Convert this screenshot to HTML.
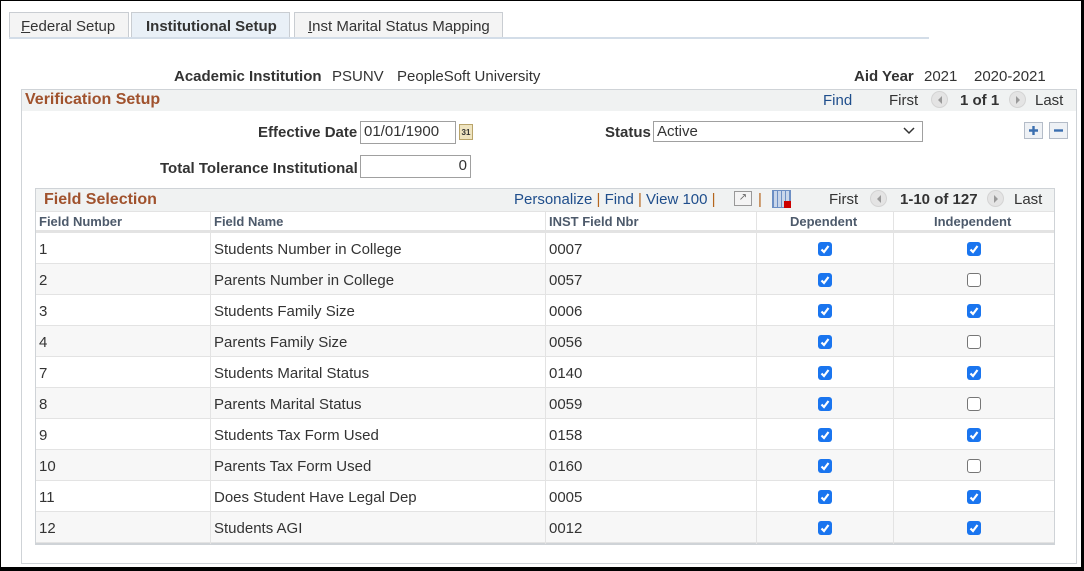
<!DOCTYPE html>
<html><head><meta charset="utf-8"><style>
*{box-sizing:border-box;margin:0;padding:0}
body{width:1084px;height:571px;background:#fff;font-family:"Liberation Sans",Arial,sans-serif;font-size:15px;color:#333;position:relative;overflow:hidden}
.frame{position:absolute;left:0;top:0;width:1084px;height:571px;border:1px solid #000;border-right:3px solid #000;border-bottom:4px solid #000}
.a{position:absolute;white-space:nowrap}
.tab{position:absolute;top:12px;height:25px;border:1px solid #c9cdd2;border-bottom:none;background:#f4f4f4;font-size:15px;color:#333;padding:5px 11px 0}
.b{font-weight:bold}
.lnk{color:#1f4e8c}
.hdr{color:#a0522d;font-weight:bold;font-size:16px}
.inp{position:absolute;border:1px solid #a0a0a0;background:#fff;font-size:15px;padding:1px 3px;height:23px}
.cb{position:absolute;width:14px;height:14px;border-radius:3px;background:#1a75ef}
.cb svg{position:absolute;left:1px;top:1px}
.cu{position:absolute;width:14px;height:14px;border-radius:3px;border:1px solid #767676;background:#fff}
.vl{position:absolute;width:1px;background:#e3e3e3}
.nav{position:absolute;width:17px;height:17px;border-radius:50%;background:#e4e4e4;border:1px solid #d4d4d4}
.nav:after{content:"";position:absolute;top:4px;border:4px solid transparent}
.nl:after{left:2px;border-right-color:#999}
.nr:after{left:6px;border-left-color:#999}
.sep{color:#b5651d}
</style></head><body>
<div class="tab" style="left:9px;width:120px"><u>F</u>ederal Setup</div>
<div class="tab b" style="left:131px;width:159px;background:#e9f0f7;padding-left:14px">Institutional Setup</div>
<div class="tab" style="left:294px;width:209px;padding-left:13px"><u>I</u>nst Marital Status Mapping</div>
<div class="a" style="left:9px;top:37px;width:920px;height:2px;background:#d3dde8"></div>

<div class="a b" style="left:174px;top:68px">Academic Institution</div>
<div class="a" style="left:332px;top:68px">PSUNV</div>
<div class="a" style="left:397px;top:68px">PeopleSoft University</div>
<div class="a b" style="left:854px;top:68px">Aid Year</div>
<div class="a" style="left:924px;top:68px">2021</div>
<div class="a" style="left:974px;top:68px">2020-2021</div>

<div class="a" style="left:21px;top:89px;width:1056px;height:475px;border:1px solid #cfd3d7"></div>
<div class="a" style="left:22px;top:90px;width:1054px;height:21px;background:#f0f2f2"></div>
<div class="a hdr" style="left:25px;top:91px">Verification Setup</div>
<div class="a lnk" style="left:823px;top:92px">Find</div>
<div class="a" style="left:889px;top:92px">First</div>
<div class="nav nl" style="left:931px;top:91px"></div>
<div class="a b" style="left:960px;top:92px">1 of 1</div>
<div class="nav nr" style="left:1009px;top:91px"></div>
<div class="a" style="left:1035px;top:92px">Last</div>

<div class="a b" style="left:258px;top:124px">Effective Date</div>
<div class="inp" style="left:360px;top:121px;width:96px">01/01/1900</div>
<div class="a" style="left:459px;top:124px;width:14px;height:16px;background:#efe4c0;border:1px solid #b9a46a;font-size:8px;font-weight:bold;text-align:center;line-height:15px">31</div>
<div class="a b" style="left:605px;top:124px">Status</div>
<div class="inp" style="left:653px;top:121px;width:270px;height:21px;padding-top:1px">Active</div>
<svg class="a" style="left:903px;top:127px" width="12" height="8"><path d="M1 1 L6 6 L11 1" fill="none" stroke="#333" stroke-width="1.5"/></svg>
<div class="a" style="left:1024px;top:122px;width:19px;height:17px;background:#eef1f5;border:1px solid #b4bcc8"><svg width="17" height="15"><path d="M8.5 3v9M4 7.5h9" stroke="#3b6fb0" stroke-width="2.4"/></svg></div>
<div class="a" style="left:1049px;top:122px;width:19px;height:17px;background:#eef1f5;border:1px solid #b4bcc8"><svg width="17" height="15"><path d="M4 7.5h9" stroke="#3b6fb0" stroke-width="2.4"/></svg></div>

<div class="a b" style="left:160px;top:160px">Total Tolerance Institutional</div>
<div class="inp" style="left:360px;top:155px;width:111px;text-align:right">0</div>

<div class="a" style="left:35px;top:188px;width:1020px;height:357px;border:1px solid #cfd3d7;border-bottom:2px solid #cfd3d7"></div>
<div class="a" style="left:36px;top:189px;width:1018px;height:22px;background:#f0f2f2"></div>
<div class="a hdr" style="left:44px;top:191px">Field Selection</div>
<div class="a lnk" style="left:514px;top:191px">Personalize <span class="sep">|</span> Find <span class="sep">|</span> View 100 <span class="sep">|</span></div>
<div class="a" style="left:734px;top:191px;width:18px;height:15px;border:1px solid #999;background:#f4f4f4;font-size:10px;text-align:center;line-height:12px;color:#666">↗</div>
<div class="a sep" style="left:758px;top:191px">|</div>
<div class="a" style="left:772px;top:190px;width:19px;height:18px;background:repeating-linear-gradient(90deg,#6d8fc4 0 1px,#c9d6ea 1px 4px),#c9d6ea;border:1px solid #6d8fc4"></div>
<div class="a" style="left:784px;top:201px;width:7px;height:7px;background:#c00"></div>
<div class="a" style="left:829px;top:191px">First</div>
<div class="nav nl" style="left:870px;top:190px"></div>
<div class="a b" style="left:900px;top:191px">1-10 of 127</div>
<div class="nav nr" style="left:987px;top:190px"></div>
<div class="a" style="left:1014px;top:191px">Last</div>

<div class="a" style="left:36px;top:211px;width:1018px;height:22px;background:#fff;border-top:1px solid #e3e3e3;border-bottom:3px solid #e3e3e3"></div>
<div class="a b" style="left:39px;top:214px;font-size:13px;color:#4d5a6b">Field Number</div>
<div class="a b" style="left:214px;top:214px;font-size:13px;color:#4d5a6b">Field Name</div>
<div class="a b" style="left:549px;top:214px;font-size:13px;color:#4d5a6b">INST Field Nbr</div>
<div class="a b" style="left:790px;top:214px;font-size:13px;color:#4d5a6b">Dependent</div>
<div class="a b" style="left:934px;top:214px;font-size:13px;color:#4d5a6b">Independent</div>

<div id="rows"></div>
<div class="vl" style="left:210px;top:211px;height:333px"></div>
<div class="vl" style="left:545px;top:211px;height:333px"></div>
<div class="vl" style="left:756px;top:211px;height:333px"></div>
<div class="vl" style="left:893px;top:211px;height:333px"></div>

<div class="frame"></div>
<script>
var d=[["1","Students Number in College","0007",1,1],["2","Parents Number in College","0057",1,0],["3","Students Family Size","0006",1,1],["4","Parents Family Size","0056",1,0],["7","Students Marital Status","0140",1,1],["8","Parents Marital Status","0059",1,0],["9","Students Tax Form Used","0158",1,1],["10","Parents Tax Form Used","0160",1,0],["11","Does Student Have Legal Dep","0005",1,1],["12","Students AGI","0012",1,1]];
var ck='<svg width="12" height="12"><path d="M2.5 6.5 L5 9 L9.5 3" fill="none" stroke="#fff" stroke-width="2.2"/></svg>';
var h='';
d.forEach(function(r,i){var y=233+i*31;
h+='<div class="a" style="left:36px;top:'+y+'px;width:1018px;height:31px;background:'+(i%2?'#f7f7f7':'#fff')+';border-bottom:1px solid #e3e3e3"></div>';
h+='<div class="a" style="left:39px;top:'+(y+8)+'px">'+r[0]+'</div>';
h+='<div class="a" style="left:214px;top:'+(y+8)+'px">'+r[1]+'</div>';
h+='<div class="a" style="left:549px;top:'+(y+8)+'px">'+r[2]+'</div>';
h+='<div class="cb" style="left:818px;top:'+(y+9)+'px">'+ck+'</div>';
h+=r[4]?'<div class="cb" style="left:967px;top:'+(y+9)+'px">'+ck+'</div>':'<div class="cu" style="left:967px;top:'+(y+9)+'px"></div>';
});
document.getElementById('rows').innerHTML=h;
</script>
</body></html>
